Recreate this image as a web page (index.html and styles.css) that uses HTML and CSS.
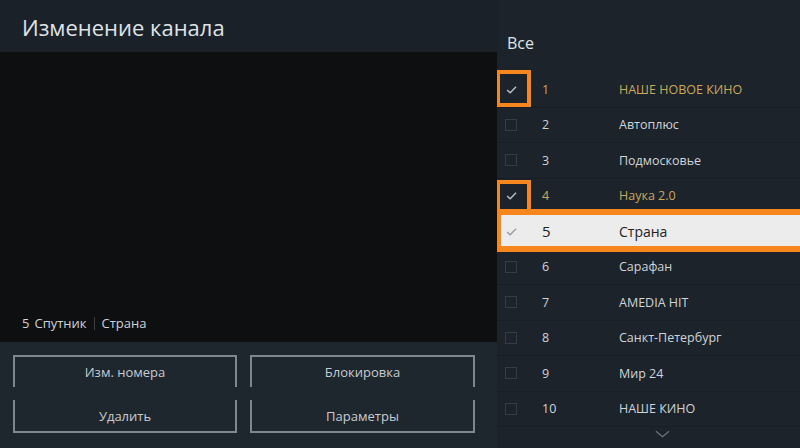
FILE: index.html
```html
<!DOCTYPE html>
<html lang="ru">
<head>
<meta charset="utf-8">
<title>Изменение канала</title>
<link rel="stylesheet" href="styles.css">
</head>
<body>
<div class="screen">
  <section class="left">
    <header class="title-bar"><h1 class="title">Изменение канала</h1></header>
    <div class="video">
      <div class="video-info"><span>5</span><span>Спутник</span><span class="sep"></span><span>Страна</span></div>
    </div>
    <div class="actions">
      <button class="btn btn-top">Изм. номера</button>
      <button class="btn btn-top">Блокировка</button>
      <button class="btn btn-bottom">Удалить</button>
      <button class="btn btn-bottom">Параметры</button>
    </div>
  </section>
  <section class="right">
    <div class="list-head">Все</div>
    <ul class="list">
      <li class="row checked"><span class="cb"><svg viewBox="0 0 12 12"><path d="M2 6.5l2.8 2.6L10.2 3.4"/></svg></span><span class="num">1</span><span class="name">НАШЕ НОВОЕ КИНО</span><span class="mark"></span></li>
      <li class="row"><span class="cb box"></span><span class="num">2</span><span class="name">Автоплюс</span></li>
      <li class="row"><span class="cb box"></span><span class="num">3</span><span class="name">Подмосковье</span></li>
      <li class="row checked"><span class="cb"><svg viewBox="0 0 12 12"><path d="M2 6.5l2.8 2.6L10.2 3.4"/></svg></span><span class="num">4</span><span class="name">Наука 2.0</span><span class="mark mark-low"></span></li>
      <li class="row focused"><span class="cb"><svg viewBox="0 0 12 12"><path d="M2 6.5l2.8 2.6L10.2 3.4"/></svg></span><span class="num">5</span><span class="name">Страна</span></li>
      <li class="row"><span class="cb box"></span><span class="num">6</span><span class="name">Сарафан</span></li>
      <li class="row"><span class="cb box"></span><span class="num">7</span><span class="name">AMEDIA HIT</span></li>
      <li class="row"><span class="cb box"></span><span class="num">8</span><span class="name">Санкт-Петербург</span></li>
      <li class="row"><span class="cb box"></span><span class="num">9</span><span class="name">Мир 24</span></li>
      <li class="row"><span class="cb box"></span><span class="num">10</span><span class="name">НАШЕ КИНО</span></li>
    </ul>
    <div class="more"><svg viewBox="0 0 16 8"><path d="M1 1l7 6 7-6"/></svg></div>
  </section>
</div>
</body>
</html>
```
FILE: styles.css
```css
* { box-sizing: border-box; margin: 0; padding: 0; }
html, body { width: 800px; height: 448px; overflow: hidden; }
body { background: #1b2129; font-family: "Open Sans", "Noto Sans", sans-serif; color: #cdd2d7; }

.screen { display: grid; grid-template-columns: 497px 303px; height: 448px; }

.left { display: flex; flex-direction: column; }
.title-bar { height: 52px; background: #1b2129; padding: 12px 0 0 22px; }
.title { font-size: 22px; font-weight: 400; color: #dfe3e7; line-height: 30px; }

.video { height: 290px; background: #0e0f10; display: flex; align-items: flex-end; padding: 0 0 10px 22px; }
.video-info { display: flex; align-items: center; gap: 5px; font-size: 13px; color: #cfd3d7; line-height: 18px; }
.video-info .sep { width: 1px; height: 13px; background: #3a3f44; margin: 0 2px; }

.actions { flex: 1; background: #1e262e; display: grid; grid-template-columns: 224px 225px; grid-template-rows: 32px 33px; column-gap: 13px; row-gap: 13px; padding: 13px 0 0 13px; }
.btn { background: transparent; color: #c7ccd1; font-family: inherit; font-size: 13px; border: 2px solid #7e878f; }
.btn-top { border-bottom: none; }
.btn-bottom { border-top: none; }

.right { position: relative; background: #1c232b; overflow: hidden; }
.list-head { height: 72px; padding: 32px 0 0 10px; font-size: 16px; color: #dfe3e7; line-height: 22px; }
.list { list-style: none; }
.row { position: relative; height: 35.5px; display: flex; align-items: center; border-bottom: 1px solid #181e25; font-size: 12.5px; color: #cfd4d9; }
.cb { width: 12px; height: 12px; margin-left: 8px; display: flex; align-items: center; justify-content: center; }
.cb.box { border: 1px solid #343c45; }
.cb svg { width: 13px; height: 13px; fill: none; stroke: #b9bec3; stroke-width: 1.3; overflow: visible; }
.num { width: 102px; padding-left: 25px; }
.name { flex: 1; }
.checked { color: #c9a95b; }
.mark { position: absolute; left: -1px; top: -2px; width: 35px; height: 37px; border: 4px solid #f7861c; }
.mark-low { top: 1px; height: 36px; }

.focused { z-index: 1; color: #222; font-size: 14px; }
.focused::before { content: ""; position: absolute; left: -2px; right: -10px; top: -5px; bottom: -3px; background: #ececec; border: 6px solid #f7861c; z-index: -1; }
.focused .num { font-size: 15px; }
.focused .cb svg { stroke: #9a9fa4; }

.more { height: 20px; display: flex; justify-content: center; padding-left: 28px; padding-top: 3px; }
.more svg { width: 15px; height: 8px; fill: none; stroke: #6b747c; stroke-width: 1.3; }
```
